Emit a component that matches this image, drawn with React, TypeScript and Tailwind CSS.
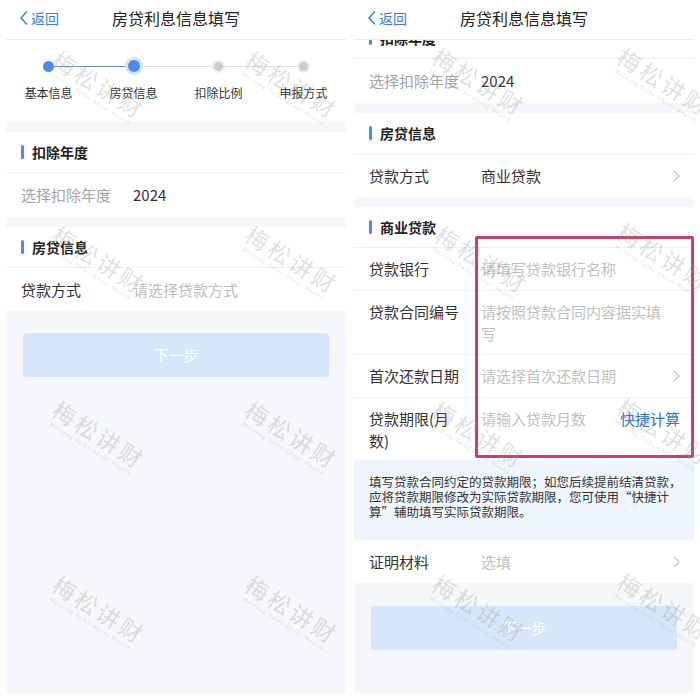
import React from "react";

const FONT = "font-['Noto_Sans_CJK_SC','Noto_Sans',sans-serif]";

function Chevron() {
  return (
    <svg width="7" height="12" viewBox="0 0 7 12" className="shrink-0">
      <path d="M1 1l5 5-5 5" fill="none" stroke="#c2c2c2" strokeWidth="1.2" />
    </svg>
  );
}

function Header() {
  return (
    <div className="h-[40px] shrink-0 bg-white border-b border-[#ebebeb] grid grid-cols-[1fr_auto_1fr] items-center pb-[3px]">
      <div className="flex items-center pl-[13px] text-[#3a7ce0] text-[14px] leading-none">
        <svg width="10" height="16" viewBox="0 0 10 16" className="mr-[2px]">
          <path d="M8 1.5L2 8l6 6.5" fill="none" stroke="#3a7ce0" strokeWidth="1.4" />
        </svg>
        <span>返回</span>
      </div>
      <div className="text-[16px] text-[#222] leading-none">房贷利息信息填写</div>
      <div />
    </div>
  );
}

function SectionTitle({ title }: { title: string }) {
  return (
    <div className="h-[41px] shrink-0 bg-white border-b border-[#efefef] flex items-center pl-[15px]">
      <div className="w-[3px] h-[14px] rounded-full bg-[#4b8bf0]" />
      <div className="ml-[8px] text-[14px] font-bold text-[#222] leading-none">{title}</div>
    </div>
  );
}

function Row({
  label,
  value,
  valueClass,
  chevron,
  h,
  border,
}: {
  label: React.ReactNode;
  value: React.ReactNode;
  valueClass: string;
  chevron?: boolean;
  h: string;
  border?: boolean;
}) {
  return (
    <div
      className={
        "shrink-0 bg-white flex items-center pl-[15px] pr-[14px] text-[15px] leading-[22px] " +
        h +
        (border ? " border-b border-[#efefef]" : "")
      }
    >
      <div className="w-[112px] shrink-0 text-[#333]">{label}</div>
      <div className={"flex-1 " + valueClass}>{value}</div>
      {chevron ? <Chevron /> : null}
    </div>
  );
}

const steps = ["基本信息", "房贷信息", "扣除比例", "申报方式"];

function Stepper() {
  return (
    <div className="h-[82px] shrink-0 bg-white pt-[17px] grid grid-cols-4">
      {steps.map((s, i) => (
        <div key={s} className="flex flex-col items-center">
          <div className="flex items-center w-full h-[18px]">
            <div
              className={
                "flex-1 h-px " +
                (i === 0 ? "bg-transparent" : i === 1 ? "bg-[#6f90c6]" : "bg-[#dedede]")
              }
            />
            {i === 0 ? (
              <div className="w-[11px] h-[11px] rounded-full bg-[#4b8bf0]" />
            ) : i === 1 ? (
              <div className="w-[12px] h-[12px] rounded-full bg-[#4b8bf0] ring-[3px] ring-[#d3e3fb]" />
            ) : (
              <div className="w-[9px] h-[9px] rounded-full bg-[#cdcdcd] ring-2 ring-[#eeeeee]" />
            )}
            <div
              className={
                "flex-1 h-px " +
                (i === 3 ? "bg-transparent" : i === 0 ? "bg-[#6f90c6]" : "bg-[#dedede]")
              }
            />
          </div>
          <div className="mt-[9px] text-[12px] leading-[17px] text-[#333]">{s}</div>
        </div>
      ))}
    </div>
  );
}

function NextButton({ mt }: { mt: string }) {
  return (
    <div
      className={
        "mx-[17px] h-[44px] shrink-0 rounded-[4px] bg-[#d6e7fb] flex items-center justify-center text-[15px] text-white " +
        mt
      }
    >
      下一步
    </div>
  );
}

function LeftPanel() {
  return (
    <div className="w-[340px] h-[693px] bg-[#f5f7fa] flex flex-col overflow-hidden">
      <Header />
      <Stepper />
      <div className="h-[10px] shrink-0" />
      <SectionTitle title="扣除年度" />
      <Row label={<span className="text-[#a3a3a3]">选择扣除年度</span>} value="2024" valueClass="text-[#333]" h="h-[44px]" />
      <div className="h-[10px] shrink-0" />
      <SectionTitle title="房贷信息" />
      <Row label="贷款方式" value="请选择贷款方式" valueClass="text-[#bdbdbd]" h="h-[43px]" />
      <NextButton mt="mt-[22px]" />
    </div>
  );
}

function RightPanel() {
  return (
    <div className="w-[340px] h-[693px] bg-[#f5f7fa] flex flex-col overflow-hidden">
      <Header />
      <div className="flex-1 overflow-hidden flex flex-col">
        <div className="mt-[-22px] flex flex-col">
          <SectionTitle title="扣除年度" />
          <Row label={<span className="text-[#a3a3a3]">选择扣除年度</span>} value="2024" valueClass="text-[#333]" h="h-[43px]" />
          <div className="h-[11px] shrink-0" />
          <SectionTitle title="房贷信息" />
          <Row label="贷款方式" value="商业贷款" valueClass="text-[#333]" chevron h="h-[43px]" />
          <div className="h-[10px] shrink-0" />
          <SectionTitle title="商业贷款" />
          <Row label="贷款银行" value="请填写贷款银行名称" valueClass="text-[#c0c0c0]" h="h-[43px]" border />
          <Row
            label="贷款合同编号"
            value={
              <>
                <span className="block">请按照贷款合同内容据实填</span>
                <span className="block">写</span>
              </>
            }
            valueClass="text-[#c0c0c0]"
            h="h-[64px] items-start pt-[10px]"
            border
          />
          <Row label="首次还款日期" value="请选择首次还款日期" valueClass="text-[#c0c0c0]" chevron h="h-[43px]" border />
          <div className="h-[62px] shrink-0 bg-white flex items-start pl-[15px] pr-[14px] pt-[10px] text-[15px] leading-[22px]">
            <div className="w-[112px] shrink-0 text-[#333]">
              <span className="block">贷款期限(月</span>
              <span className="block">数)</span>
            </div>
            <div className="flex-1 text-[#c0c0c0]">请输入贷款月数</div>
            <div className="text-[#3373d9]">快捷计算</div>
          </div>
          <div className="h-[80px] shrink-0 bg-[#eef5fd] pl-[15px] pt-[14px] text-[12.5px] leading-[15px] text-[#333]">
            <span className="block whitespace-nowrap">填写贷款合同约定的贷款期限；如您后续提前结清贷款，</span>
            <span className="block whitespace-nowrap">应将贷款期限修改为实际贷款期限，您可使用“快捷计</span>
            <span className="block whitespace-nowrap">算”辅助填写实际贷款期限。</span>
          </div>
          <Row label="证明材料" value="选填" valueClass="text-[#c0c0c0]" chevron h="h-[43px]" />
          <NextButton mt="mt-[23px]" />
        </div>
      </div>
    </div>
  );
}

const marks = [
  "left-[97px] top-[88px]",
  "left-[290px] top-[88px]",
  "left-[97px] top-[263px]",
  "left-[290px] top-[263px]",
  "left-[97px] top-[438px]",
  "left-[290px] top-[438px]",
  "left-[97px] top-[613px]",
  "left-[290px] top-[613px]",
  "left-[477px] top-[85px]",
  "left-[662px] top-[85px]",
  "left-[480px] top-[263px]",
  "left-[662px] top-[260px]",
  "left-[477px] top-[438px]",
  "left-[662px] top-[435px]",
  "left-[477px] top-[612px]",
  "left-[662px] top-[610px]",
];

function Watermark({ pos }: { pos: string }) {
  return (
    <div className={"absolute pointer-events-none " + pos}>
      <div className="-translate-x-1/2 -translate-y-1/2 rotate-[32deg] flex flex-col items-center">
        <div className="text-[23px] leading-none tracking-[3px] font-normal text-[rgba(150,150,150,0.3)] whitespace-nowrap">
          梅松讲财
        </div>
        <div className="mt-[2px] text-[6px] leading-none tracking-[1px] text-[rgba(150,150,150,0.35)] whitespace-nowrap font-['Liberation_Serif',serif]">
          Meisong Talks About Wealth
        </div>
      </div>
    </div>
  );
}

export default function App() {
  return (
    <div className={"relative w-[700px] h-[700px] bg-white overflow-hidden flex gap-[8px] pl-[6px] " + FONT}>
      <LeftPanel />
      <RightPanel />
      <div className="absolute left-[475px] top-[236px] w-[219px] h-[222px] border-[3px] border-[#cc3d6e] rounded-[2px] pointer-events-none" />
      {marks.map((m) => (
        <Watermark key={m} pos={m} />
      ))}
    </div>
  );
}
